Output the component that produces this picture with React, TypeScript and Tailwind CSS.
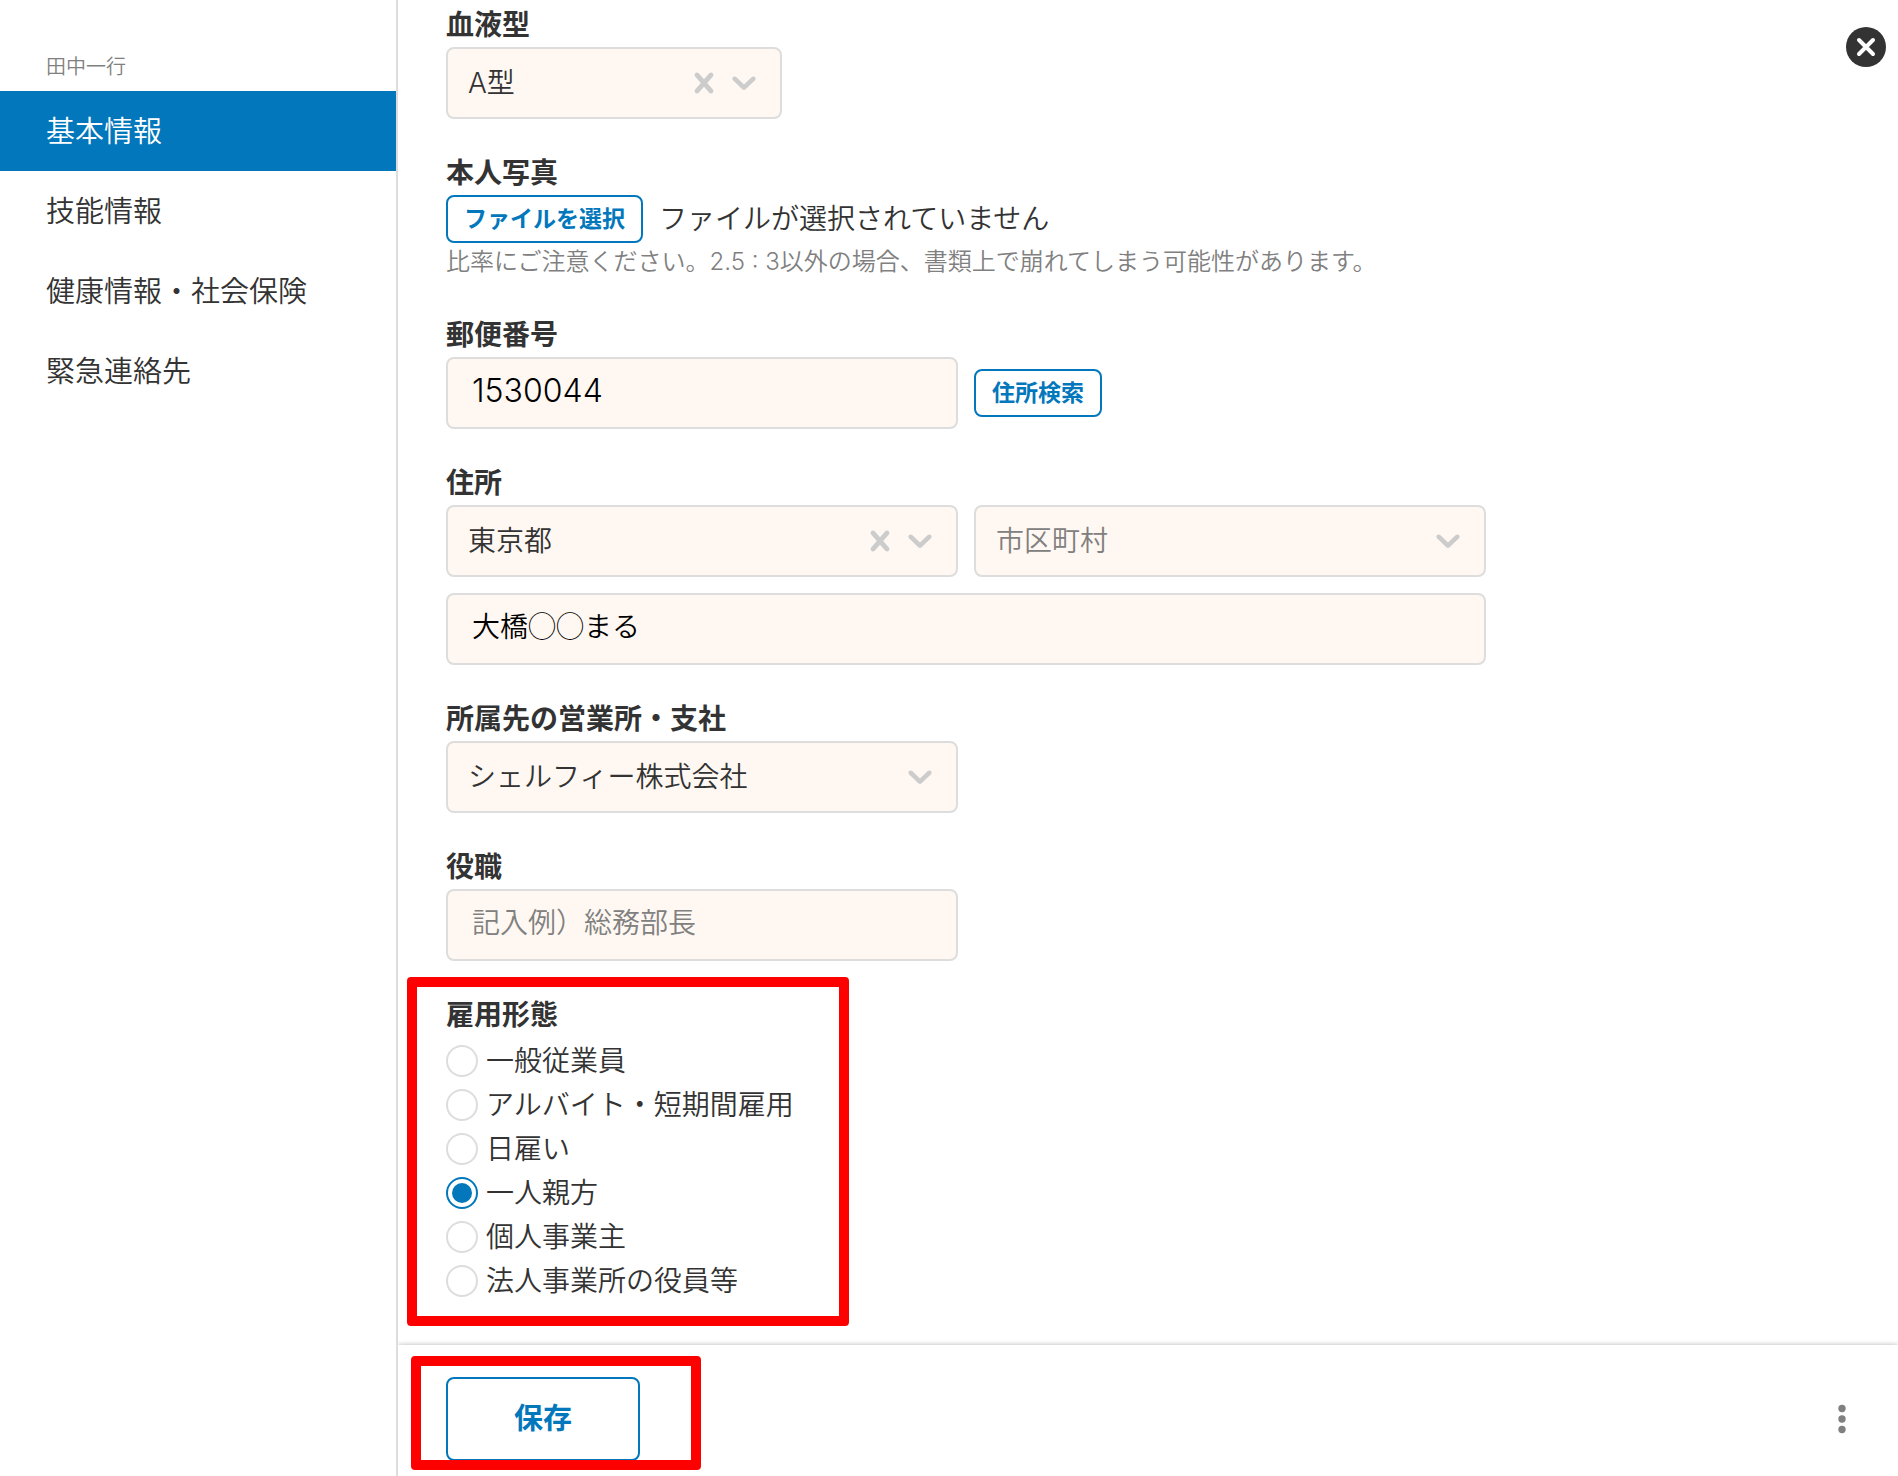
import { useRef, useState } from 'react';

const NAV_ITEMS = ['基本情報', '技能情報', '健康情報・社会保険', '緊急連絡先'];

const EMPLOYMENT_TYPES = [
  '一般従業員',
  'アルバイト・短期間雇用',
  '日雇い',
  '一人親方',
  '個人事業主',
  '法人事業所の役員等',
];

const labelClass = 'block leading-[44px] font-bold';
const inputClass =
  'block w-full h-[72px] rounded-lg border-2 border-[#dddddd] bg-[#fff8f2] px-6 text-black placeholder:text-[#808080] outline-none focus:border-[#0277bb]';
const smallButtonClass =
  'h-12 shrink-0 rounded-lg border-2 border-[#0277bb] bg-white px-4 text-[23px] leading-none font-bold text-[#0277bb]';

function CrossIcon() {
  return (
    <svg viewBox="0 0 20 20" className="size-10 fill-[#cccccc]" aria-hidden="true">
      <path d="M14.348 14.849c-0.469 0.469-1.229 0.469-1.697 0l-2.651-3.030-2.651 3.029c-0.469 0.469-1.229 0.469-1.697 0-0.469-0.469-0.469-1.229 0-1.697l2.758-3.15-2.759-3.152c-0.469-0.469-0.469-1.228 0-1.697s1.228-0.469 1.697 0l2.652 3.031 2.651-3.031c0.469-0.469 1.228-0.469 1.697 0s0.469 1.229 0 1.697l-2.758 3.152 2.758 3.15c0.469 0.469 0.469 1.229 0 1.698z" />
    </svg>
  );
}

function ChevronIcon() {
  return (
    <svg viewBox="0 0 20 20" className="size-10 fill-[#cccccc]" aria-hidden="true">
      <path d="M4.516 7.048c0.436-0.446 1.043-0.481 1.576 0l3.908 3.747 3.908-3.747c0.533-0.481 1.141-0.446 1.574 0 0.436 0.445 0.408 1.197 0 1.615-0.406 0.418-4.695 4.502-4.695 4.502-0.217 0.223-0.502 0.335-0.787 0.335s-0.57-0.112-0.789-0.335c0 0-4.287-4.084-4.695-4.502s-0.436-1.17 0-1.615z" />
    </svg>
  );
}

interface SelectBoxProps {
  id: string;
  options: string[];
  initial?: string;
  placeholder?: string;
  clearable?: boolean;
  ariaLabel?: string;
}

function SelectBox({ id, options, initial = '', placeholder = '', clearable, ariaLabel }: SelectBoxProps) {
  const [value, setValue] = useState(initial);

  return (
    <div className="relative w-full">
      <select
        id={id}
        aria-label={ariaLabel}
        value={value}
        onChange={(e) => setValue(e.target.value)}
        className={`block w-full h-[72px] appearance-none rounded-lg border-2 border-[#dddddd] bg-[#fff8f2] pl-5 pr-24 outline-none focus:border-[#0277bb] ${
          value ? 'text-[#333333]' : 'text-[#808080]'
        }`}
      >
        <option value="">{placeholder}</option>
        {options.map((option) => (
          <option key={option} value={option}>
            {option}
          </option>
        ))}
      </select>
      <div className="pointer-events-none absolute inset-y-0 right-[18px] flex items-center">
        {clearable && value && (
          <button type="button" aria-label="クリア" className="pointer-events-auto" onClick={() => setValue('')}>
            <CrossIcon />
          </button>
        )}
        <ChevronIcon />
      </div>
    </div>
  );
}

function Sidebar() {
  const [active, setActive] = useState(NAV_ITEMS[0]);

  return (
    <aside className="w-[398px] shrink-0 border-r-2 border-[#dddddd] pt-11">
      <p className="px-[46px] text-[20px] leading-[47px] text-[#808080]">田中一行</p>
      <nav>
        {NAV_ITEMS.map((item) => (
          <a
            key={item}
            href="#"
            onClick={() => setActive(item)}
            className={`block px-[46px] pt-[2px] text-[29px] leading-[78px] ${
              item === active ? 'bg-[#0277bb] text-white' : 'text-[#333333]'
            }`}
          >
            {item}
          </a>
        ))}
      </nav>
    </aside>
  );
}

export default function App() {
  const fileRef = useRef<HTMLInputElement>(null);
  const [fileName, setFileName] = useState('');
  const [employment, setEmployment] = useState('一人親方');

  return (
    <div
      lang="ja"
      className="relative flex h-screen overflow-hidden bg-white font-['Inter','Noto_Sans_CJK_JP',sans-serif] text-[28px] font-[350] text-[#333333]"
    >
      <Sidebar />

      <form className="flex min-w-0 flex-1 flex-col overflow-hidden" onSubmit={(e) => e.preventDefault()}>
        <div className="flex min-h-0 flex-1 flex-col gap-8 overflow-hidden px-12 pt-[3px]">
          <div className="w-[336px]">
            <label htmlFor="blood" className={labelClass}>血液型</label>
            <SelectBox id="blood" options={['A型', 'B型', 'O型', 'AB型']} initial="A型" clearable />
          </div>

          <div>
            <label htmlFor="photo" className={labelClass}>本人写真</label>
            <div className="flex items-center gap-4">
              <button type="button" className={smallButtonClass} onClick={() => fileRef.current?.click()}>
                ファイルを選択
              </button>
              <input
                ref={fileRef}
                id="photo"
                type="file"
                accept="image/*"
                className="hidden"
                onChange={(e) => setFileName(e.target.files?.[0]?.name ?? '')}
              />
              <span className="leading-[48px]">{fileName || 'ファイルが選択されていません'}</span>
            </div>
            <p className="text-[24px] leading-[38px] text-[#808080]">
              比率にご注意ください。2.5 : 3以外の場合、書類上で崩れてしまう可能性があります。
            </p>
          </div>

          <div>
            <label htmlFor="zip" className={labelClass}>郵便番号</label>
            <div className="flex items-center gap-4">
              <div className="w-[512px]">
                <input id="zip" type="text" defaultValue="1530044" className={`${inputClass} pb-[6px] text-[32px] font-light`} />
              </div>
              <button type="button" className={smallButtonClass}>住所検索</button>
            </div>
          </div>

          <div className="max-w-[1040px]">
            <label htmlFor="prefecture" className={labelClass}>住所</label>
            <div className="grid grid-cols-2 gap-4">
              <SelectBox id="prefecture" options={['東京都', '神奈川県', '千葉県', '埼玉県']} initial="東京都" clearable />
              <SelectBox id="city" ariaLabel="市区町村" options={['目黒区', '渋谷区', '世田谷区']} placeholder="市区町村" />
              <div className="col-span-2">
                <input
                  type="text"
                  aria-label="番地"
                  defaultValue="大橋◯◯まる"
                  className={`${inputClass} pb-2 font-['Noto_Sans_CJK_JP',sans-serif]`}
                />
              </div>
            </div>
          </div>

          <div className="w-[512px]">
            <label htmlFor="office" className={labelClass}>所属先の営業所・支社</label>
            <SelectBox id="office" options={['シェルフィー株式会社']} initial="シェルフィー株式会社" />
          </div>

          <div className="w-[512px]">
            <label htmlFor="position" className={labelClass}>役職</label>
            <input id="position" type="text" placeholder="記入例）総務部長" className={`${inputClass} pb-1`} />
          </div>

          <div className="relative w-[366px]">
            <fieldset>
              <legend className={labelClass}>雇用形態</legend>
              <div className="pt-[2px]">
                {EMPLOYMENT_TYPES.map((type) => (
                  <label key={type} className="flex h-11 items-center gap-2 whitespace-nowrap">
                    <input
                      type="radio"
                      name="employment"
                      value={type}
                      checked={employment === type}
                      onChange={() => setEmployment(type)}
                      className="size-8 shrink-0 appearance-none rounded-full border-2 border-[#dddddd] bg-white bg-clip-content p-1 checked:border-[#0277bb] checked:bg-[#0277bb]"
                    />
                    {type}
                  </label>
                ))}
              </div>
            </fieldset>
            {/* highlight frame */}
            <div className="pointer-events-none absolute -top-4 -right-[37px] -bottom-[23px] -left-[39px] rounded-sm border-[10px] border-[#ff0000]" />
          </div>
        </div>

        <footer className="flex shrink-0 items-center justify-between bg-white pt-8 pr-9 pb-[15px] pl-12 shadow-[0_0_5px_rgba(0,0,0,0.3)]">
          <div className="relative">
            <button
              type="submit"
              className="block h-[84px] w-[194px] rounded-lg border-2 border-[#0277bb] bg-white text-[29px] font-bold text-[#0277bb]"
            >
              保存
            </button>
            {/* highlight frame */}
            <div className="pointer-events-none absolute -top-[21px] -right-[61px] -bottom-[9px] -left-[35px] rounded-sm border-[10px] border-[#ff0000]" />
          </div>
          <button type="button" aria-label="メニュー" className="flex size-10 items-center justify-center">
            <svg viewBox="0 0 40 40" className="size-10 fill-[#808080]" aria-hidden="true">
              <circle cx="20" cy="9.5" r="3.7" />
              <circle cx="20" cy="20" r="3.7" />
              <circle cx="20" cy="30.5" r="3.7" />
            </svg>
          </button>
        </footer>
      </form>

      <button type="button" aria-label="閉じる" className="absolute top-[27px] right-3 size-10 rounded-full bg-[#333333]">
        <svg viewBox="0 0 40 40" className="size-10" fill="none" stroke="#ffffff" strokeWidth="4" strokeLinecap="round" aria-hidden="true">
          <path d="M13 13 27 27M27 13 13 27" />
        </svg>
      </button>
    </div>
  );
}
